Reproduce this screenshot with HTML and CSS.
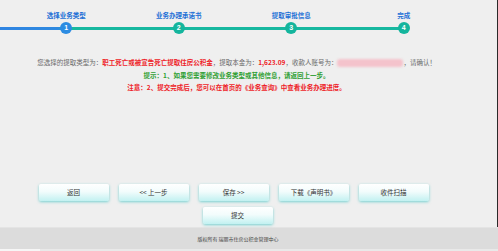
FILE: index.html
```html
<!DOCTYPE html>
<html lang="zh-CN">
<head>
    <meta charset="UTF-8">
    <meta name="viewport" content="width=device-width, initial-scale=1.0">
    <title>提取审批信息</title>
    <link rel="stylesheet" href="styles.css">
</head>
<body>

    <div class="main">
        <div class="steps">
            <div class="step">
                <span class="step-label">选择业务类型</span>
                <span class="dot dot-first">1</span>
            </div>
            <div class="step">
                <span class="step-label">业务办理承诺书</span>
                <span class="dot">2</span>
            </div>
            <div class="step">
                <span class="step-label">提取审批信息</span>
                <span class="dot">3</span>
            </div>
            <div class="step">
                <span class="step-label">完成</span>
                <span class="dot">4</span>
            </div>
        </div>

        <div class="info">
            <p class="line">
                您选择的提取类型为：<b class="red">职工死亡或被宣告死亡提取住房公积金</b>，提取本金为：<b class="red">1,623.09</b>，收款人账号为：<span class="masked"></span>，请确认！
            </p>
            <p class="line green">提示：1、如果您需要修改业务类型或其他信息，请返回上一步。</p>
            <p class="line red">注意：2、提交完成后，您可以在首页的《业务查询》中查看业务办理进度。</p>
        </div>

        <div class="actions">
            <div class="btn-row">
                <button type="button" class="btn">返回</button>
                <button type="button" class="btn">&lt;&lt; 上一步</button>
                <button type="button" class="btn">保存 &gt;&gt;</button>
                <button type="button" class="btn">下载《声明书》</button>
                <button type="button" class="btn">收件扫描</button>
            </div>
            <div class="btn-row">
                <button type="button" class="btn">提交</button>
            </div>
        </div>
    </div>

    <div class="footer">版权所有 瑞丽市住房公积金管理中心</div>
    <div class="bottom"><span class="bottom-tab"></span></div>

</body>
</html>
```

FILE: styles.css
```css
body {
    margin: 0;
    font-family: "Noto Sans CJK SC", "DejaVu Sans", sans-serif;
    background-color: #efefef;
    overflow: hidden;
}

.main {
    height: 227px;
    width: 498px;
    box-sizing: border-box;
    border-right: 1px solid #2a2a2a;
    display: flex;
    flex-direction: column;
}

/* pasos */
.steps {
    position: relative;
    display: flex;
    padding: 10px 0 0 10px;
}

.steps::before {
    content: "";
    position: absolute;
    left: 0;
    top: 27px;
    width: 405px;
    height: 3px;
    background: linear-gradient(to right, #2f84e2 0, #2f8ae0 58px, #17b8a0 68px, #17b8a0 100%);
}

.step {
    width: 112.5px;
    display: flex;
    flex-direction: column;
    align-items: center;
    gap: 2px;
}

.step-label {
    height: 10px;
    line-height: 10px;
    font-size: 6.5px;
    font-weight: bold;
    color: #1d6fd6;
}

.dot {
    position: relative;
    width: 12px;
    height: 12px;
    border-radius: 50%;
    background-color: #14b59d;
    color: #ffffff;
    font-family: "Liberation Sans", sans-serif;
    font-size: 7px;
    font-weight: bold;
    line-height: 12px;
    text-align: center;
}

.dot-first {
    background-color: #2c8ce2;
}

/* mensajes */
.info {
    margin-top: 22px;
    padding-right: 24px;
    text-align: center;
}

.line {
    margin: 0;
    height: 12.5px;
    line-height: 12.5px;
    font-size: 6.5px;
    color: #6a6a6a;
    white-space: nowrap;
}

.red {
    color: #ee1d28;
    font-weight: bold;
}

.green {
    color: #2f9f33;
    font-weight: bold;
}

.masked {
    display: inline-block;
    width: 66px;
    height: 8px;
    vertical-align: middle;
    border-radius: 3px;
    background-color: #f4c3cc;
    filter: blur(1.2px);
}

/* botones */
.actions {
    margin-top: 90px;
    display: flex;
    flex-direction: column;
    gap: 6px;
}

.btn-row {
    display: flex;
    justify-content: center;
    gap: 10px;
    padding-right: 30px;
}

.btn-row + .btn-row {
    padding-right: 22px;
}

.btn {
    width: 70px;
    height: 17px;
    padding: 0;
    border: none;
    border-radius: 2px;
    background: linear-gradient(#ffffff 0, #f2fcfc 45%, #c2f1f1 100%);
    box-shadow: 0 1px 3px rgba(40, 190, 190, 0.6);
    font-family: "Noto Sans CJK SC", sans-serif;
    font-size: 6.5px;
    color: #333333;
    cursor: pointer;
}

/* pie */
.footer {
    height: 21px;
    line-height: 21px;
    background-color: #dcdcdc;
    border-top: 1px solid #e4e4e4;
    text-align: center;
    font-size: 5px;
    color: #444444;
    padding-right: 22px;
}

.bottom {
    height: 3px;
    background-color: #e9e9e9;
}

.bottom-tab {
    display: block;
    width: 40px;
    height: 3px;
    background-color: #f6f6f6;
}
```
